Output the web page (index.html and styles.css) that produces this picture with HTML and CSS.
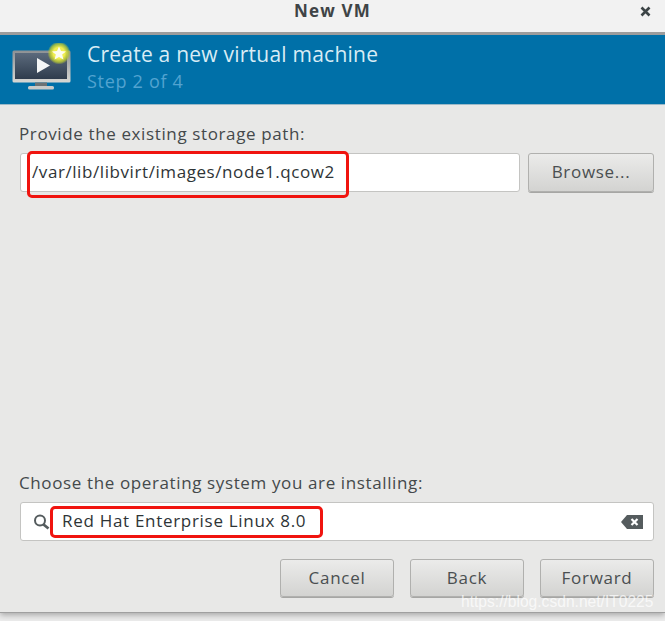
FILE: index.html
```html
<!DOCTYPE html>
<html lang="en">
<head>
<meta charset="utf-8">
<title>New VM</title>
<link rel="stylesheet" href="styles.css">
</head>
<body>
<div class="window">
  <header class="titlebar">
    <span class="title">New VM</span>
    <svg class="close" width="11" height="11" viewBox="0 0 11 11"><path d="M1.5 1.5l8 8M9.500 1.500l-8 8" stroke="#3c4446" stroke-width="2.600" fill="none"/></svg>
  </header>
  <section class="banner">
    <svg class="vm-icon" width="64" height="54" viewBox="0 0 64 54">
      <defs>
        <linearGradient id="scr" x1="0" y1="0" x2="0" y2="1"><stop offset="0" stop-color="#5b6a7c"/><stop offset="1" stop-color="#2f3c4d"/></linearGradient>
        <linearGradient id="frm" x1="0" y1="0" x2="0" y2="1"><stop offset="0" stop-color="#8c9093"/><stop offset="1" stop-color="#d8d8d4"/></linearGradient>
        <radialGradient id="glow"><stop offset="0.5" stop-color="#f0ee50"/><stop offset="0.8" stop-color="#b9c832" stop-opacity="0.8"/><stop offset="1" stop-color="#b9c832" stop-opacity="0"/></radialGradient>
      </defs>
      <rect x="0.500" y="7.500" width="58" height="32" rx="1.500" fill="url(#frm)"/>
      <rect x="3" y="10" width="52" height="26" fill="url(#scr)"/>
      <path d="M25 15l13 7.500-13 7.500z" fill="#f4f6f6"/>
      <rect x="23" y="39.500" width="12" height="3.500" fill="#6d7274"/>
      <rect x="16" y="43" width="26" height="3.500" rx="1.500" fill="#c9cbc9"/>
      <circle cx="47" cy="10" r="11.500" fill="url(#glow)"/>
      <path d="M47 3.500l2 4.500 5 .4-3.800 3.200 1.200 4.900-4.400-2.600-4.400 2.600 1.200-4.900-3.800-3.200 5-.4z" fill="#fdfdf0"/>
    </svg>
    <div class="banner-text">
      <div class="banner-title">Create a new virtual machine</div>
      <div class="banner-step">Step 2 of 4</div>
    </div>
  </section>
  <main class="content">
    <label class="field-label">Provide the existing storage path:</label>
    <div class="path-row">
      <div class="entry path-entry">/var/lib/libvirt/images/node1.qcow2</div>
      <button class="btn browse">Browse...</button>
    </div>
    <div class="spacer"></div>
    <label class="field-label">Choose the operating system you are installing:</label>
    <div class="entry os-entry">
      <svg class="search" width="17" height="16" viewBox="0 0 17 16"><circle cx="7" cy="6.500" r="5" fill="none" stroke="#555c5e" stroke-width="2"/><path d="M10.500 10.500l5 4" stroke="#555c5e" stroke-width="2.800" fill="none"/></svg>
      <span class="os-text">Red Hat Enterprise Linux 8.0</span>
      <svg class="clear" width="22" height="14" viewBox="0 0 22 14"><path d="M6 0h16v14H6L0 7z" fill="#555c5e"/><path d="M10.500 4l6 6M16.500 4l-6 6" stroke="#fff" stroke-width="2.200"/></svg>
    </div>
    <div class="actions">
      <button class="btn action">Cancel</button>
      <button class="btn action">Back</button>
      <button class="btn action">Forward</button>
    </div>
  </main>
</div>
<div class="mark mark-path"></div>
<div class="mark mark-os"></div>
<div class="watermark">https://blog.csdn.net/IT0225</div>
</body>
</html>
```
FILE: styles.css
```css
* { box-sizing: border-box; }
html, body { margin: 0; padding: 0; }
body {
  width: 665px;
  height: 621px;
  overflow: hidden;
  position: relative;
  background: #ececec;
  font-family: "Open Sans", "Noto Sans", sans-serif;
  color: #3b4143;
}
.window {
  height: 612px;
  display: flex;
  flex-direction: column;
  background: #e8e8e7;
  box-shadow: 0 1px 0 #a0a0a0, 0 3px 6px rgba(0,0,0,.3);
}
.titlebar {
  height: 35px;
  flex: none;
  position: relative;
  display: flex;
  justify-content: center;
  background: #f2f2f2;
  border-bottom: 3px solid #9c9c9c;
}
.title {
  font-size: 17px;
  font-weight: 700;
  letter-spacing: 1.2px;
  line-height: 22px;
  color: #3f4446;
}
.close { position: absolute; right: 14px; top: 6px; }
.banner {
  height: 70px;
  flex: none;
  display: flex;
  align-items: flex-start;
  background: #0070a8;
  border-bottom: 1px solid #9cb9c8;
  padding: 7px 0 0 12px;
}
.vm-icon { flex: none; margin: 1px 11px 0 0; }
.banner-title { font-size: 21px; line-height: 24px; letter-spacing: 0.23px; color: #d8ecf5; }
.banner-step { font-size: 18px; line-height: 24px; letter-spacing: 0.7px; color: #52a3d0; margin-top: 3px; }
.content {
  flex: 1;
  display: flex;
  flex-direction: column;
  padding: 18px 11px 15px 19px;
}
.field-label { font-size: 17px; line-height: 22px; letter-spacing: 0.62px; color: #44494b; }
.path-row { display: flex; gap: 8px; margin-top: 8px; padding-left: 1px; }
.entry {
  height: 39px;
  background: #fff;
  border: 1px solid #c4c4c2;
  border-radius: 3px;
  font-size: 17px;
  letter-spacing: 0.58px;
  color: #2e3436;
  display: flex;
  align-items: center;
  padding-bottom: 2px;
}
.path-entry { width: 500px; padding-left: 11px; }
.btn {
  font-family: inherit;
  font-size: 17px;
  letter-spacing: 0.7px;
  color: #4a4f51;
  height: 39px;
  border: 1px solid #b0b0ae;
  border-radius: 3px;
  background: linear-gradient(#ebebea, #d3d3d1);
  padding: 0 0 2px;
  box-shadow: 0 1px 0 #a6a6a4;
}
.browse { width: 126px; }
.spacer { flex: 1; }
.os-entry { margin: 8px 0 0 1px; padding: 0 10px 2px 12px; }
.search { flex: none; margin-top: 2px; }
.os-text { flex: 1; margin-left: 12px; letter-spacing: 0.7px; }
.clear { flex: none; margin-top: 2px; }
.actions { display: flex; justify-content: flex-end; gap: 16px; margin-top: 18px; }
.action { width: 114px; height: 38px; }
.mark {
  position: absolute;
  border: 3px solid #f0140f;
  border-radius: 5px;
}
.mark-path { left: 27px; top: 151px; width: 322px; height: 47px; }
.mark-os { left: 50px; top: 506px; width: 273px; height: 32px; }
.watermark {
  position: absolute;
  left: 461px;
  top: 592px;
  font-family: "Liberation Sans", sans-serif;
  font-size: 15.600px;
  line-height: 20px;
  color: rgba(255,255,255,.72);
  white-space: nowrap;
}
```
